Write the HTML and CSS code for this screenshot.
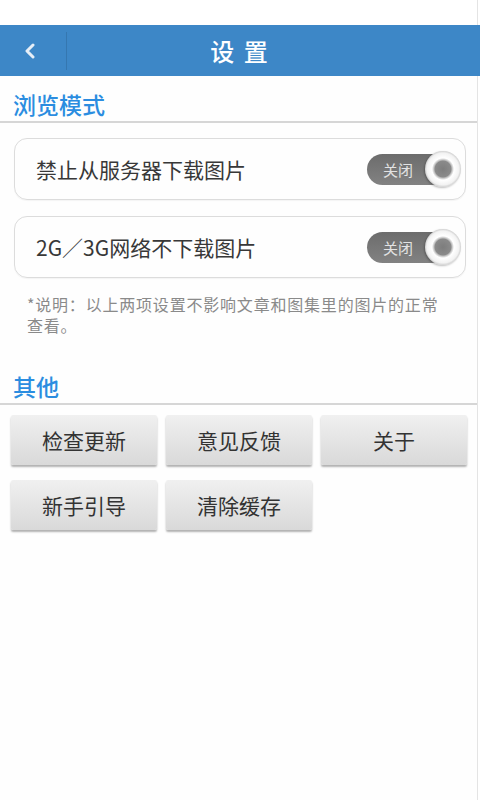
FILE: index.html
```html
<!DOCTYPE html>
<html lang="zh-CN">
<head>
    <meta charset="UTF-8">
    <meta name="viewport" content="width=device-width, initial-scale=1.0">
    <title>设置</title>
    <link rel="stylesheet" href="styles.css">
</head>
<body>
    <div class="page">
        <div class="status"></div>
        <div class="header">
            <div class="back">
                <svg width="14" height="16" viewBox="0 0 14 16">
                    <path d="M10 2 L4 8 L10 14" fill="none" stroke="#e6eef7" stroke-width="3" stroke-linecap="round" stroke-linejoin="round"/>
                </svg>
            </div>
            <h1 class="title">设 置</h1>
        </div>

        <div class="section">浏览模式</div>
        <div class="cards">
            <div class="card">
                <span class="card-text">禁止从服务器下载图片</span>
                <div class="toggle"><span class="toggle-label">关闭</span><span class="knob"></span></div>
            </div>
            <div class="card">
                <span class="card-text">2G／3G网络不下载图片</span>
                <div class="toggle"><span class="toggle-label">关闭</span><span class="knob"></span></div>
            </div>
            <p class="note">*说明：以上两项设置不影响文章和图集里的图片的正常查看。</p>
        </div>

        <div class="section other">其他</div>
        <div class="buttons">
            <button class="button">检查更新</button>
            <button class="button">意见反馈</button>
            <button class="button">关于</button>
            <button class="button">新手引导</button>
            <button class="button">清除缓存</button>
        </div>
    </div>
</body>
</html>
```

FILE: styles.css
```css
body {
    margin: 0;
    background: #fff;
    font-family: "Noto Sans CJK SC", "Noto Sans", sans-serif;
    color: #333;
}

.page {
    width: 477px;
    min-height: 800px;
    border-right: 1px solid #e4e4e4;
    background: #fefefe;
}

.status {
    height: 25px;
    background: #fff;
}

.header {
    height: 51px;
    width: 480px;
    background: #3d87c7;
    display: flex;
    align-items: center;
}

.back {
    width: 67px;
    height: 38px;
    border-right: 1px solid #3577b0;
    display: flex;
    align-items: center;
    justify-content: center;
    box-sizing: border-box;
    padding-right: 6px;
}

.title {
    flex: 1;
    margin: 0 0 0 -67px;
    text-align: center;
    color: #fff;
    font-size: 24px;
    font-weight: 500;
    letter-spacing: 2px;
    line-height: 51px;
}

.section {
    color: #2b8de0;
    font-size: 23px;
    font-weight: 500;
    line-height: 30px;
    padding: 13px 0 2px 13px;
    border-bottom: 2px solid #d6d6d6;
}

.cards {
    padding: 15px 11px 0 14px;
    display: flex;
    flex-direction: column;
    gap: 16px;
}

.card {
    height: 60px;
    border: 1px solid #dcdcdc;
    border-radius: 13px;
    display: flex;
    align-items: center;
    justify-content: space-between;
    padding: 0 4px 0 21px;
    box-shadow: 0 1px 1px rgba(0, 0, 0, 0.04);
}

.card-text {
    font-size: 21px;
    color: #383838;
}

.toggle {
    width: 94px;
    height: 36px;
    display: flex;
    align-items: center;
    position: relative;
}

.toggle-label {
    width: 80px;
    height: 31px;
    background: linear-gradient(#6c6c6c, #828282);
    border-radius: 16px;
    color: #e2e2e2;
    font-size: 15px;
    line-height: 31px;
    padding-left: 16px;
    box-sizing: border-box;
}

.knob {
    position: absolute;
    right: 0;
    top: 0;
    width: 36px;
    height: 36px;
    border-radius: 50%;
    background: radial-gradient(circle at 50% 50%, #7d7d7d 0, #8a8a8a 8px, #bdbdbd 9px, #fff 11px, #f2f2f2 16px, #cfcfcf 18px);
    box-shadow: -1px 1px 2px rgba(0, 0, 0, 0.25);
}

.note {
    margin: 0 0 0 13px;
    padding-right: 16px;
    font-size: 16px;
    line-height: 21px;
    letter-spacing: 0.8px;
    color: #8a8a8a;
}

.other {
    padding-top: 35px;
}

.buttons {
    display: grid;
    grid-template-columns: repeat(3, 146px);
    column-gap: 9px;
    row-gap: 15px;
    padding: 10px 0 0 11px;
}

.button {
    height: 50px;
    border: none;
    border-radius: 2px;
    background: linear-gradient(#f0f0f0, #d9d9d9);
    box-shadow: 0 2px 2px rgba(0, 0, 0, 0.3);
    font-family: "Noto Sans CJK SC", "Noto Sans", sans-serif;
    font-size: 21px;
    color: #333;
    padding: 0;
}
```
